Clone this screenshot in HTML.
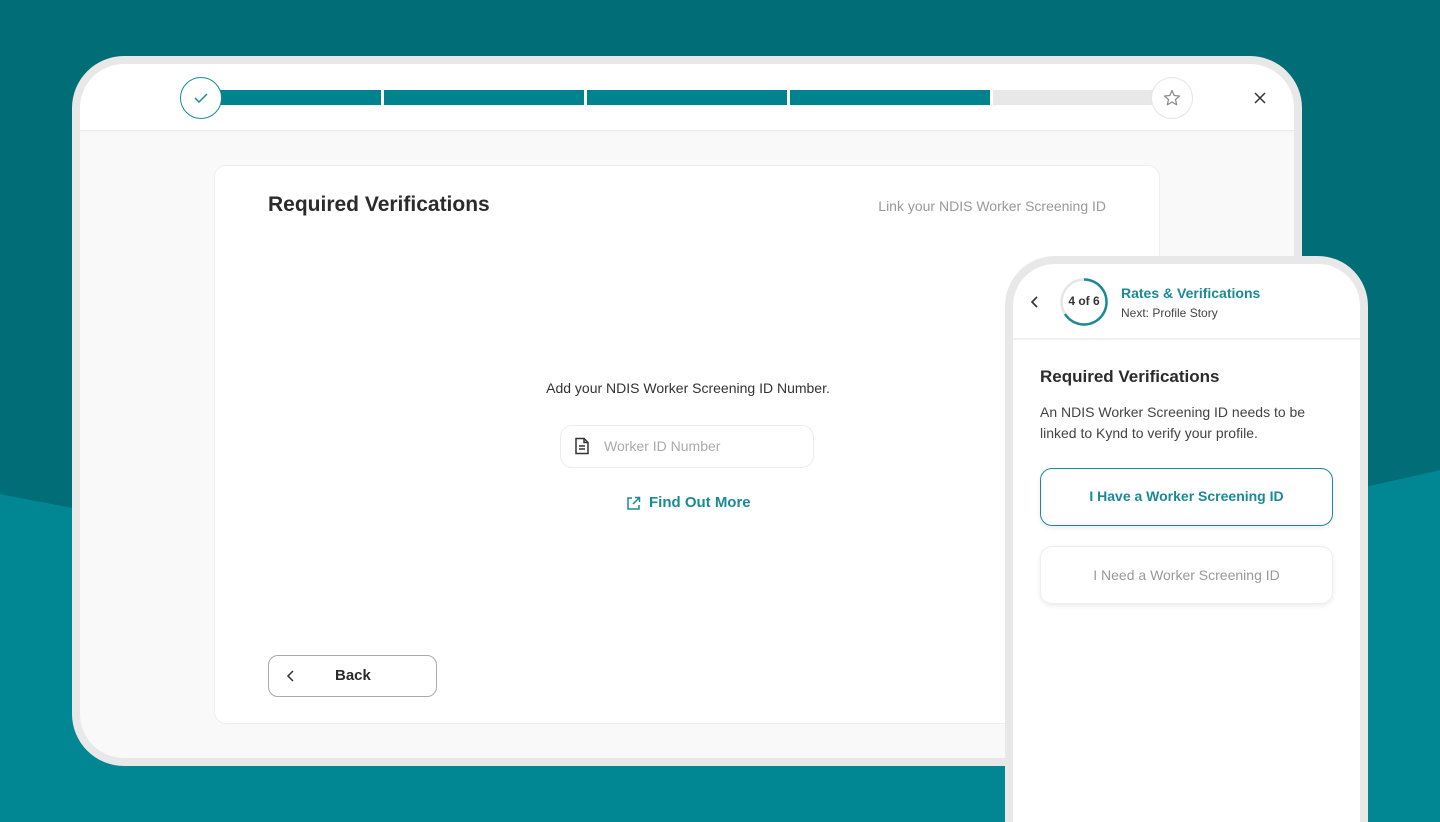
<!DOCTYPE html>
<html style="width:1440px;height:822px;overflow:hidden"><head><meta charset="utf-8"><style>
*{margin:0;padding:0;box-sizing:border-box}
body{width:1440px;height:822px;overflow:hidden;position:relative;background:#016d76;font-family:"Liberation Sans",sans-serif;color:#2b2b2b}
.abs{position:absolute}
.tab{left:72px;top:56px;width:1230px;height:710px;border-radius:52px;background:#e8e8e8}
.tabin{left:8px;top:8px;width:1214px;height:694px;border-radius:44px;background:#f9f9f9;overflow:hidden}
.hdr{left:0;top:0;width:100%;height:67px;background:#fff;border-bottom:1px solid #ececec;box-shadow:0 1px 3px rgba(0,0,0,.04)}
.bar{top:26px;height:15px;background:#00838f}
.card{left:134px;top:101px;width:946px;height:559px;background:#fff;border-radius:12px;border:1px solid #eee}
.phone{left:1005px;top:256px;width:363px;height:566px;border-radius:50px 50px 0 0;background:#e8e8e8;overflow:hidden}
.phin{left:8px;top:8px;width:347px;height:570px;border-radius:42px 42px 0 0;background:#fff;overflow:hidden}
</style></head><body>
<svg class="abs" style="left:0;top:0" width="1440" height="822"><path d="M0,494 Q720,640 1440,470 L1440,822 L0,822Z" fill="#018693"/></svg>

<div class="abs tab"><div class="abs tabin">
 <div class="abs hdr">
  <div class="abs bar" style="left:140px;width:161px"></div>
  <div class="abs bar" style="left:304px;width:200px"></div>
  <div class="abs bar" style="left:507px;width:200px"></div>
  <div class="abs bar" style="left:710px;width:200px"></div>
  <div class="abs" style="left:913px;top:26px;width:170px;height:15px;background:#e8e8e8"></div>
  <div class="abs" style="left:100px;top:13px;width:42px;height:42px;border-radius:50%;border:1.5px solid #1a8a95;background:#fff"></div>
  <svg class="abs" style="left:113px;top:27px" width="16" height="14"><path d="M2,7 L6,11 L14,3" fill="none" stroke="#1a8a95" stroke-width="1.5"/></svg>
  <div class="abs" style="left:1071px;top:13px;width:42px;height:42px;border-radius:50%;border:1px solid #e4e4e4;background:#fff"></div>
  <svg class="abs" style="left:1082px;top:24px" width="20" height="20"><path d="M10,2.5 L12.2,7.5 L17.5,8 L13.5,11.5 L14.7,16.8 L10,14 L5.3,16.8 L6.5,11.5 L2.5,8 L7.8,7.5Z" fill="none" stroke="#8a8f96" stroke-width="1.3" stroke-linejoin="round"/></svg>
  <svg class="abs" style="left:1173px;top:27px" width="14" height="14"><path d="M2,2 L12,12 M12,2 L2,12" stroke="#333" stroke-width="1.5"/></svg>
 </div>
 <div class="abs card">
  <div class="abs" style="left:53px;top:27px;font-size:21px;font-weight:bold;color:#2b2b2b">Required Verifications</div>
  <div class="abs" style="right:53px;top:32px;font-size:14px;color:#999">Link your NDIS Worker Screening ID</div>
  <div class="abs" style="left:0;width:946px;top:214px;text-align:center;font-size:14px;color:#333">Add your NDIS Worker Screening ID Number.</div>
  <div class="abs" style="left:345px;top:259px;width:254px;height:43px;border:1px solid #ececec;border-radius:12px;background:#fff"></div>
  <svg class="abs" style="left:359px;top:271px" width="16" height="18"><path d="M2,1.5 H10 L14,5.5 V16.5 H2Z M10,1.5 V5.5 H14 M5,9 H11 M5,12 H11" fill="none" stroke="#333" stroke-width="1.5"/></svg>
  <div class="abs" style="left:389px;top:272px;font-size:14px;color:#aaa">Worker ID Number</div>
  <svg class="abs" style="left:410px;top:329px" width="17" height="17"><path d="M7,3 H3 V14 H14 V10 M10,2.5 H14.5 V7 M14.5,2.5 L8,9" fill="none" stroke="#1a8a95" stroke-width="1.5"/></svg>
  <div class="abs" style="left:434px;top:328px;font-size:15px;font-weight:bold;color:#1a8a95">Find Out More</div>
  <div class="abs" style="left:53px;top:489px;width:169px;height:42px;border:1px solid #aaa;border-radius:10px"></div>
  <svg class="abs" style="left:71px;top:503px" width="10" height="14"><path d="M7,2 L2,7 L7,12" fill="none" stroke="#333" stroke-width="1.5"/></svg>
  <div class="abs" style="left:120px;top:501px;font-size:15px;font-weight:bold;color:#2b2b2b">Back</div>
 </div>
</div></div>

<div class="abs phone"><div class="abs phin">
 <div class="abs" style="left:0;top:0;width:347px;height:76px;border-bottom:2px solid #f0f0f0"></div>
 <svg class="abs" style="left:17px;top:31px" width="10" height="14"><path d="M7,2 L2,7 L7,12" fill="none" stroke="#333" stroke-width="1.6"/></svg>
 <svg class="abs" style="left:46px;top:13px" width="50" height="50"><circle cx="25" cy="25" r="22.5" fill="none" stroke="#e6e6e6" stroke-width="2.5"/><path d="M25,2.5 A22.5,22.5 0 1 1 6,37" fill="none" stroke="#1a8a95" stroke-width="2.5"/></svg>
 <div class="abs" style="left:46px;top:30px;width:50px;text-align:center;font-size:12px;font-weight:bold;color:#333">4 of 6</div>
 <div class="abs" style="left:108px;top:21px;font-size:14px;font-weight:bold;color:#1a8a95">Rates &amp; Verifications</div>
 <div class="abs" style="left:108px;top:42px;font-size:12px;color:#444">Next: Profile Story</div>
 <div class="abs" style="left:27px;top:103px;font-size:17px;font-weight:bold;color:#2b2b2b">Required Verifications</div>
 <div class="abs" style="left:27px;top:138px;width:300px;font-size:14px;line-height:21px;color:#444">An NDIS Worker Screening ID needs to be linked to Kynd to verify your profile.</div>
 <div class="abs" style="left:27px;top:204px;width:293px;height:58px;border:1.5px solid #1a8a95;border-radius:12px;box-shadow:0 2px 5px rgba(0,0,0,.08);text-align:center;line-height:55px;font-size:14px;font-weight:bold;color:#1a8a95">I Have a Worker Screening ID</div>
 <div class="abs" style="left:27px;top:282px;width:293px;height:58px;border:1px solid #eee;border-radius:12px;box-shadow:0 2px 5px rgba(0,0,0,.08);text-align:center;line-height:56px;font-size:14px;color:#999">I Need a Worker Screening ID</div>
</div></div>
</body></html>
